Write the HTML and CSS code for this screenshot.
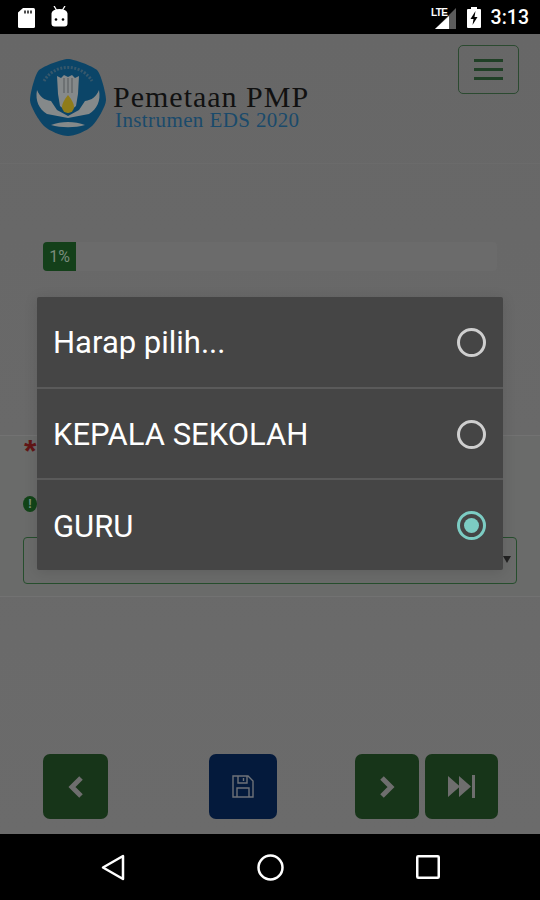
FILE: index.html
```html
<!DOCTYPE html>
<html lang="id">
<head>
<meta charset="utf-8">
<title>Pemetaan PMP</title>
<link rel="stylesheet" href="styles.css">
</head>
<body>
<div class="phone">
  <div class="status">
    <div class="status-left">
      <svg class="ic-sd" width="17" height="20" viewBox="0 0 17 20"><path d="M5 0h10.500a1.500 1.500 0 0 1 1.500 1.500v17a1.500 1.500 0 0 1-1.500 1.500h-14a1.500 1.500 0 0 1-1.500-1.500v-14z" fill="#fff"/><path d="M7 2.500v3M10 2.500v3M13 2.500v3" stroke="#000" stroke-width="1.400"/></svg>
      <svg class="ic-bot" width="17" height="21" viewBox="0 0 17 21"><path d="M3 0l2.500 4M14 0l-2.500 4" stroke="#fff" stroke-width="1.300"/><path d="M0.500 7.500a8 4.500 0 0 1 16 0v10a3 3 0 0 1-3 3h-10a3 3 0 0 1-3-3z" fill="#fff"/><circle cx="5" cy="13.500" r="1.300" fill="#000"/><circle cx="12" cy="13.500" r="1.300" fill="#000"/></svg>
    </div>
    <div class="status-right">
      <svg class="ic-signal" width="25" height="22" viewBox="0 0 25 22"><path d="M25 1v21h-21z" fill="#5c5c5c"/><path d="M18 9v13h-14z" fill="#fff"/><text x="0" y="9" class="lte">LTE</text></svg>
      <svg class="ic-batt" width="14" height="21" viewBox="0 0 14 21"><path d="M4 0h6v2h3a1 1 0 0 1 1 1v17a1 1 0 0 1-1 1h-12a1 1 0 0 1-1-1v-17a1 1 0 0 1 1-1h3z" fill="#fff"/><path d="M8.500 4l-5 8h3l-1 6 5-8h-3z" fill="#000"/></svg>
      <span class="clock">3:13</span>
    </div>
  </div>

  <div class="app">
    <header class="topbar">
      <div class="brand">
        <svg class="logo" width="76" height="77" viewBox="0 0 76 77">
          <path d="M38 0c6 0 24 7 29 11 4 4 9 24 9 30 0 6-9 21-14 26-5 5-18 10-24 10s-19-5-24-10c-5-5-14-20-14-26 0-6 5-26 9-30 5-4 23-11 29-11z" fill="#0b4568"/>
          <path d="M27 17l4 2 3-3 4 2 4-2 3 3 4-2-1 18-2 12-8 7-8-7-2-12z" fill="#85898a"/>
          <path d="M7 31c3 7 7 10 14 11l6 9 11 6 11-6 6-9c7-1 11-4 14-11 2 11-2 19-10 24l-21 4-21-4c-8-5-12-13-10-24z" fill="#85898a"/>
          <path d="M21 66c10-4 24-4 34 0-10 3-24 3-34 0z" fill="#85898a"/>
          <path d="M38 36c4 5 6 9 6 12a6 6 0 0 1-12 0c0-3 2-7 6-12z" fill="#8f7c1a"/>
          <path d="M34 19v15M38 19v15M42 19v15" stroke="#656a6c" stroke-width="1.500"/>
          <path d="M14 22a28 28 0 0 1 48 0" fill="none" stroke="#36586c" stroke-width="3" stroke-dasharray="2 1.500"/>
        </svg>
        <div class="brand-text">
          <span class="brand-title">Pemetaan PMP</span>
          <span class="brand-sub">Instrumen EDS 2020</span>
        </div>
      </div>
      <button class="burger" type="button" aria-label="Menu"><i></i><i></i><i></i></button>
    </header>

    <section class="progress-wrap">
      <div class="progress"><div class="bar">1%</div></div>
    </section>

    <section class="question">
      <div class="req">*</div>
      <div class="hint"><span class="hint-dot">!</span></div>
      <div class="select"><span class="caret"></span></div>
    </section>

    <nav class="actions">
      <button class="btn btn-prev" type="button"><svg width="18" height="24" viewBox="0 0 18 24"><path d="M14 3l-9 9 9 9" fill="none" stroke="#6e6e6e" stroke-width="5"/></svg></button>
      <button class="btn btn-save" type="button"><svg width="22" height="23" viewBox="0 0 22 23"><path d="M1 1h15l5 5v16h-20z M6 1v7h9v-7 M5 22v-9h12v9 M11.500 3v3" fill="none" stroke="#6e7278" stroke-width="1.400"/></svg></button>
      <div class="btn-group">
        <button class="btn btn-next" type="button"><svg width="18" height="24" viewBox="0 0 18 24"><path d="M4 3l9 9-9 9" fill="none" stroke="#6e6e6e" stroke-width="5"/></svg></button>
        <button class="btn btn-last" type="button"><svg width="27" height="23" viewBox="0 0 27 23"><path d="M0 1l12 10.500-12 10.500zM11 1l12 10.500-12 10.500z" fill="#6e6e6e"/><path d="M24 0h3v23h-3z" fill="#6e6e6e"/></svg></button>
      </div>
    </nav>
  </div>

  <div class="softkeys">
    <svg width="24" height="27" viewBox="0 0 24 27"><path d="M22 2v23l-20-11.500z" fill="none" stroke="#fff" stroke-width="2.500" stroke-linejoin="round"/></svg>
    <svg width="27" height="27" viewBox="0 0 27 27"><circle cx="13.500" cy="13.500" r="12" fill="none" stroke="#fff" stroke-width="2.500"/></svg>
    <svg width="24" height="24" viewBox="0 0 24 24"><rect x="1.250" y="1.250" width="21.500" height="21.500" rx="1" fill="none" stroke="#fff" stroke-width="2.500"/></svg>
  </div>

  <div class="dialog" role="radiogroup">
    <div class="option"><span>Harap pilih...</span><i class="radio"></i></div>
    <div class="option"><span>KEPALA SEKOLAH</span><i class="radio"></i></div>
    <div class="option"><span>GURU</span><i class="radio on"></i></div>
  </div>
</div>
</body>
</html>
```
FILE: styles.css
```css
* { box-sizing: border-box; }
html, body { margin: 0; padding: 0; background: #000; }
body { font-family: Roboto, "Liberation Sans", sans-serif; }
.phone { position: relative; width: 540px; height: 900px; display: flex; flex-direction: column; overflow: hidden; }

.status { height: 34px; flex: none; background: #000; display: flex; justify-content: space-between; align-items: center; padding: 0 11px 0 18px; }
.status-left { display: flex; align-items: center; gap: 16px; }
.ic-sd { margin-top: 2px; }
.ic-bot { margin-top: -2px; }
.status-right { display: flex; align-items: center; }
.ic-signal { margin-right: 11px; margin-top: 1px; }
.ic-batt { margin-right: 10px; }
.lte { font: 700 10px "Liberation Sans", sans-serif; fill: #fff; letter-spacing: -0.6px; }
.clock { color: #fff; font: 500 19.500px Roboto, sans-serif; }

.app { flex: 1; display: flex; flex-direction: column; background: linear-gradient(#676767, #6b6b6b); }

.topbar { height: 130px; flex: none; display: flex; justify-content: space-between; align-items: flex-start; border-bottom: 1px solid #6b6b6b; padding: 11px 21px 0 30px; }
.brand { display: flex; align-items: flex-start; margin-top: 14px; }
.logo { flex: none; }
.brand-text { display: flex; flex-direction: column; margin: 26px 0 0 7px; }
.brand-title { font: 400 30px/24px "Liberation Serif", serif; color: #111; letter-spacing: 1px; }
.brand-sub { font: 400 21px/18px "Liberation Serif", serif; color: #1a4a6b; letter-spacing: 0.4px; margin: 2px 0 0 2px; }
.burger { width: 61px; height: 49px; background: transparent; border: 1px solid #2b4a30; border-radius: 5px; padding: 13px 15px 0; display: flex; flex-direction: column; gap: 6px; }
.burger i { display: block; height: 3px; background: #204026; width: 100%; }

.progress-wrap { padding: 78px 43px 0; flex: none; }
.progress { height: 29px; border-radius: 4px; background: #6b6b6b; overflow: hidden; }
.bar { width: 33px; height: 100%; background: #14401a; color: #7a8c7c; font-size: 16px; line-height: 29px; text-align: center; }

.question { margin-top: 164px; height: 162px; flex: none; border-top: 1px solid #727272; border-bottom: 1px solid #727272; background: #6a6b6a; padding: 0 23px; display: flex; flex-direction: column; }
.req { color: #621616; font: 700 32px/30px "Liberation Sans", sans-serif; height: 60px; padding-left: 1px; }
.hint { height: 41px; }
.hint-dot { display: block; width: 14px; height: 16px; border-radius: 50%; background: #124418; color: #79907d; font: 700 12px/16px "Liberation Sans", sans-serif; text-align: center; }
.select { height: 47px; border: 1px solid #264e2d; border-radius: 4px; position: relative; }
.caret { position: absolute; right: 5px; top: 18px; border: 4px solid transparent; border-top: 7px solid #222; border-bottom: 0; }

.actions { flex: 1; display: flex; align-items: flex-start; padding: 157px 42px 0 43px; }
.btn { height: 65px; border: 0; border-radius: 7px; padding: 0; display: flex; align-items: center; justify-content: center; }
.btn-prev { width: 65px; background: #173519; }
.btn-save { width: 68px; background: #041a3c; margin-left: 101px; }
.btn-group { display: flex; gap: 6px; margin-left: 78px; }
.btn-next { width: 64px; background: #173519; }
.btn-last { width: 73px; background: #173519; }

.softkeys { height: 66px; flex: none; background: #000; display: flex; align-items: center; padding-left: 101px; }
.softkeys svg:nth-child(1) { margin-right: 132px; }
.softkeys svg:nth-child(2) { margin-right: 132px; }

.dialog { position: absolute; left: 37px; top: 297px; width: 466px; height: 273px; background: #454545; border-radius: 2px; box-shadow: 0 2px 14px rgba(0, 0, 0, 0.12); display: flex; flex-direction: column; }
.option { flex: 1; display: flex; align-items: center; justify-content: space-between; padding: 0 17px 0 16px; color: #fff; font-size: 31px; border-top: 2px solid #5a5a5a; }
.option:first-child { border-top: 0; }
.option span { padding-top: 2px; }
.radio { width: 29px; height: 29px; border: 3px solid #cfcfcf; border-radius: 50%; display: block; margin-top: 1px; }
.radio.on { border-color: #7cccc3; position: relative; }
.radio.on::after { content: ""; position: absolute; left: 4px; top: 4px; width: 15px; height: 15px; border-radius: 50%; background: #7cccc3; }
```
